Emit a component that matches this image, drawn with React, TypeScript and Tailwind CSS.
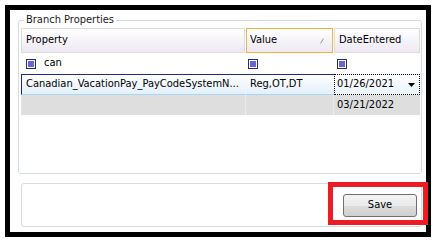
import React from 'react';

const font = { fontFamily: '"DejaVu Sans Condensed", "Liberation Sans", sans-serif' };

function FilterBox() {
  return (
    <span className="flex h-[10px] w-[10px] items-center justify-center border border-[#2a2a6a] bg-white">
      <span className="h-[6px] w-[6px] bg-[#6666d6]" />
    </span>
  );
}

export default function App() {
  return (
    <div className="relative h-[244px] w-[441px] bg-white p-[5px] text-[11px] text-black" style={font}>
      <div className="flex h-[232px] w-[426px] flex-col border-[5px] border-black">
        <fieldset className="ml-[8px] mt-[4px] h-[160px] w-[404px] rounded-[3px] border border-[#d3dbe4]">
          <legend className="ml-[5px] px-[2px] leading-[12px] text-[#1a1a1a]">Branch Properties</legend>

          <div className="ml-[2px] mt-[2px] flex w-[399px] flex-col">
            {/* header */}
            <div className="flex h-[25px]">
              <div className="mr-[1px] flex w-[224px] items-center border border-[#dcdcdc] bg-gradient-to-b from-white to-[#eee8f2] pl-[4px]">
                Property
              </div>
              <div className="mr-[1px] flex w-[87px] items-center justify-between border border-[#f4b13e] bg-gradient-to-b from-white to-[#eee8f2] pl-[3px] pr-[8px]">
                <span>Value</span>
                <svg width="4" height="6" viewBox="0 0 4 6">
                  <line x1="0.5" y1="5.5" x2="3.5" y2="0.5" stroke="#9a9a9a" strokeWidth="1" />
                </svg>
              </div>
              <div className="flex w-[86px] items-center border border-[#dcdcdc] bg-gradient-to-b from-white to-[#eee8f2] pl-[4px]">
                DateEntered
              </div>
            </div>

            {/* filter row */}
            <div className="flex h-[21px] items-center">
              <div className="flex w-[225px] items-center gap-[8px] pl-[5px]">
                <FilterBox />
                <span>can</span>
              </div>
              <div className="flex w-[88px] items-center pl-[2px]">
                <FilterBox />
              </div>
              <div className="flex w-[86px] items-center pl-[3px]">
                <FilterBox />
              </div>
            </div>

            {/* selected row */}
            <div className="flex h-[21px]">
              <div className="flex w-[313px] border-b border-l border-t border-b-[#a6d8f2] border-l-[#1c2a86] border-t-[#1c2a86] bg-gradient-to-b from-white to-[#e2f0fa]">
                <div className="flex w-[224px] items-center overflow-hidden whitespace-nowrap border-r border-dotted border-r-[#f4f8fb] pl-[4px]">
                  Canadian_VacationPay_PayCodeSystemN...
                </div>
                <div className="flex flex-1 items-center pl-[4px]">Reg,OT,DT</div>
              </div>
              <div className="flex w-[86px] items-center justify-between border border-dotted border-black bg-gradient-to-b from-white to-[#e8f3fb] pl-[2px] pr-[4px]">
                <span>01/26/2021</span>
                <svg width="7" height="4" viewBox="0 0 7 4">
                  <polygon points="0,0 7,0 3.5,4" fill="#000" />
                </svg>
              </div>
            </div>

            {/* second row */}
            <div className="flex h-[20px] bg-[#dedede]">
              <div className="w-[225px] border-r border-dotted border-r-[#f4f4f4]" />
              <div className="w-[88px] border-r border-dotted border-r-[#f4f4f4]" />
              <div className="flex flex-1 items-center pl-[3px]">03/21/2022</div>
            </div>
          </div>
        </fieldset>

        <div className="ml-[11px] mt-[9px] flex h-[44px] w-[401px] items-center justify-end rounded-[3px] border border-[#d3dbe4] pr-[4px]">
          <button className="flex h-[23px] w-[74px] items-center justify-center rounded-[3px] border border-[#707070] bg-[linear-gradient(#f3f3f3_0%,#ebebeb_50%,#dddddd_51%,#cfcfcf_100%)] text-[11px]">
            Save
          </button>
        </div>
      </div>

      <div className="absolute left-[328px] top-[182px] h-[43px] w-[100px] border-[5px] border-[#ed1c24]" />
    </div>
  );
}
